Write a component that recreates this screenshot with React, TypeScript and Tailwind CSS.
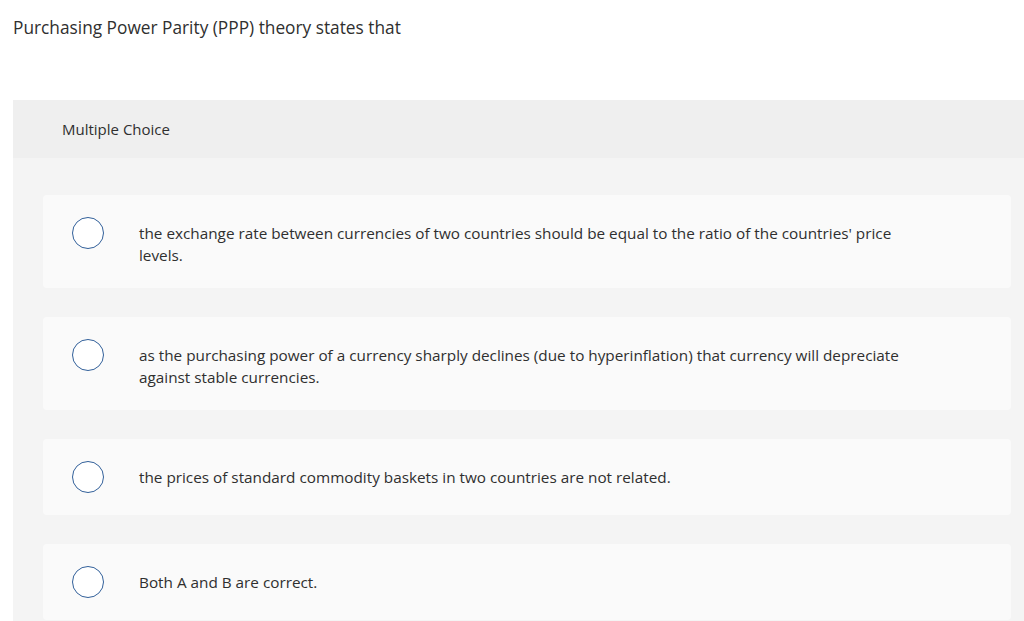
import React from "react";

const options = [
  "the exchange rate between currencies of two countries should be equal to the ratio of the countries' price levels.",
  "as the purchasing power of a currency sharply declines (due to hyperinflation) that currency will depreciate against stable currencies.",
  "the prices of standard commodity baskets in two countries are not related.",
  "Both A and B are correct.",
];

export default function App() {
  return (
    <div className="w-[1024px] h-[621px] overflow-hidden bg-white text-[#2f2f2f] font-['Open_Sans',sans-serif] flex flex-col">
      <div className="pt-[16px] pl-[13px] text-[17.3px] leading-[24px]">
        Purchasing Power Parity (PPP) theory states that
      </div>
      <div className="ml-[13px] mt-[60px] bg-[#f4f4f4] flex-1">
        <div className="h-[58px] bg-[#efefef] pl-[49px] flex items-center text-[15px]">
          Multiple Choice
        </div>
        <div className="pt-[37px] pl-[30px] pr-[13px] flex flex-col gap-[29px]">
          {options.map((o, i) => (
            <div key={i} className="bg-[#fafafa] rounded-[4px] py-[22px] pl-[29px] pr-[91px] flex items-start">
              <div className="w-[32px] h-[32px] shrink-0 rounded-full border-[1.5px] border-[#32609a] bg-white" />
              <div className="ml-[35px] pt-[6px] text-[15.3px] leading-[21.5px] min-h-[32px]">{o}</div>
            </div>
          ))}
        </div>
      </div>
    </div>
  );
}
